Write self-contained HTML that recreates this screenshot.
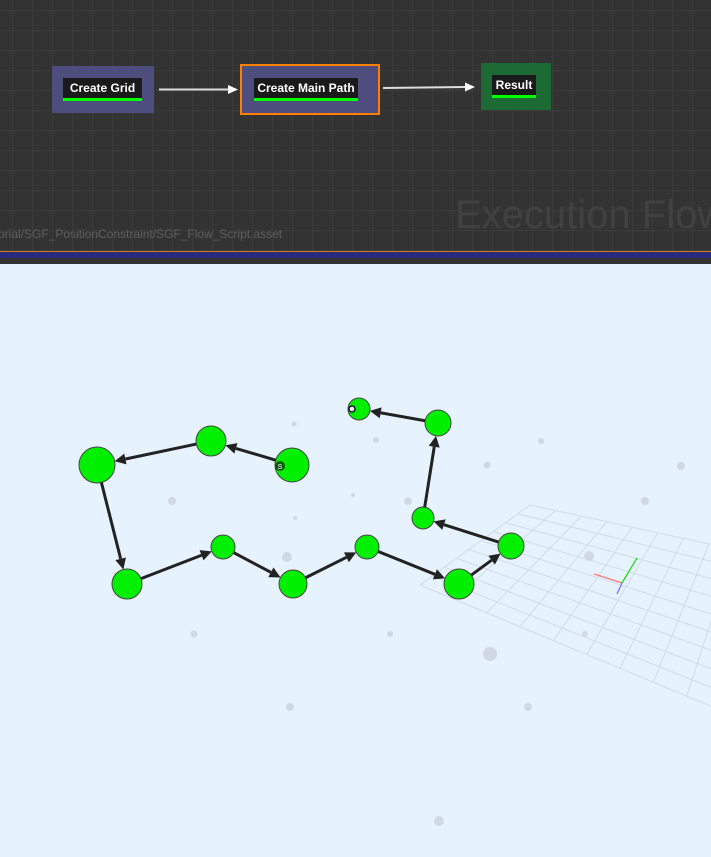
<!DOCTYPE html>
<html><head><meta charset="utf-8"><style>
html,body{margin:0;padding:0;width:711px;height:857px;overflow:hidden;background:#e6f2fe;font-family:"Liberation Sans",sans-serif}
#top{position:absolute;left:0;top:0;width:711px;height:251px;background-color:#333;
background-image:linear-gradient(to right,#3b3b3b 1px,transparent 1px),linear-gradient(to bottom,#3b3b3b 1px,transparent 1px);
background-size:20px 20px;background-position:12px 10px}
.node{position:absolute;box-sizing:border-box}
.lbl{position:absolute;background:#1a1a1a;color:#fff;font-weight:bold;font-size:12px;text-align:center;line-height:20px;border-bottom:3px solid #00ff00}
</style></head><body>
<div id="top">
<div style="position:absolute;left:455px;top:193px;font-size:40px;color:#414141;white-space:nowrap">Execution Flow</div>
<div style="position:absolute;left:-2px;top:227px;font-size:12px;color:#5e5e5e;white-space:nowrap">orial/SGF_PositionConstraint/SGF_Flow_Script.asset</div>
<div class="node" style="left:52px;top:66px;width:102px;height:47px;background:#4e4e7e"><div class="lbl" style="left:11px;top:12px;width:79px">Create Grid</div></div>
<div class="node" style="left:240px;top:64px;width:140px;height:51px;background:#4e4e7e;border:2px solid #ff8000"><div class="lbl" style="left:12px;top:12px;width:104px">Create Main Path</div></div>
<div class="node" style="left:481px;top:63px;width:70px;height:47px;background:#1e6a34"><div class="lbl" style="left:11px;top:12px;width:44px">Result</div></div>
<svg width="711" height="251" style="position:absolute;left:0;top:0">
<line x1="159" y1="89.5" x2="228" y2="89.5" stroke="#ddd" stroke-width="2"/><polygon points="228,85 238,89.5 228,94" fill="#fff"/>
<line x1="383" y1="88" x2="465" y2="87" stroke="#ddd" stroke-width="2"/><polygon points="465,82.5 475,87 465,91.5" fill="#fff"/>
</svg>
</div>
<div style="position:absolute;left:0;top:251px;width:711px;height:1px;background:#d57a1a"></div>
<div style="position:absolute;left:0;top:252px;width:711px;height:6px;background:#2a2a80"></div>
<div style="position:absolute;left:0;top:258px;width:711px;height:6px;background:#333"></div>
<svg id="s" width="711" height="593" viewBox="0 264 711 593" style="position:absolute;left:0;top:264px"></svg>
<script>
var s=document.getElementById('s'),h='';
function L(a,b,t){return [a[0]+(b[0]-a[0])*t,a[1]+(b[1]-a[1])*t];}
var A=[530,505],B=[760,555],C=[720,710],D=[420,585];
for(var i=0;i<=9;i++){var t=i/9,p=L(A,D,t),q=L(B,C,t);h+='<line x1="'+p[0]+'" y1="'+p[1]+'" x2="'+q[0]+'" y2="'+q[1]+'" stroke="#d2dbe6" stroke-width="1"/>';
p=L(A,B,t);q=L(D,C,t);h+='<line x1="'+p[0]+'" y1="'+p[1]+'" x2="'+q[0]+'" y2="'+q[1]+'" stroke="#d2dbe6" stroke-width="1"/>';}
h+='<line x1="594" y1="574" x2="622" y2="583" stroke="#f77" stroke-width="1.3"/><line x1="622" y1="583" x2="637" y2="558" stroke="#2d2" stroke-width="1.3"/><line x1="622" y1="583" x2="617" y2="594" stroke="#77f" stroke-width="1.3"/>';
var d=[[294,424,2.5],[376,440,3],[541,441,3],[487,465,3.5],[681,466,4],[172,501,4],[353,495,2],[295,518,2],[408,501,4],[645,501,4],[287,557,5],[589,556,5],[194,634,3.5],[390,634,3],[585,634,3],[490,654,7],[290,707,4],[528,707,4],[439,821,5]];
d.forEach(function(c){h+='<circle cx="'+c[0]+'" cy="'+c[1]+'" r="'+c[2]+'" fill="#d0d9e3"/>';});
var n=[[292,465,17],[211,441,15],[97,465,18],[127,584,15],[223,547,12],[293,584,14],[367,547,12],[459,584,15],[511,546,13],[423,518,11],[438,423,13],[359,409,11]];
n.forEach(function(c){h+='<circle cx="'+c[0]+'" cy="'+c[1]+'" r="'+c[2]+'" fill="#00f000" stroke="#444" stroke-width="1"/>';});
for(var i=0;i<n.length-1;i++){var a=n[i],b=n[i+1],dx=b[0]-a[0],dy=b[1]-a[1],l=Math.sqrt(dx*dx+dy*dy),ux=dx/l,uy=dy/l;
var x1=a[0]+ux*a[2],y1=a[1]+uy*a[2],x2=b[0]-ux*b[2],y2=b[1]-uy*b[2],bx=x2-ux*11,by=y2-uy*11;
h+='<line x1="'+x1+'" y1="'+y1+'" x2="'+bx+'" y2="'+by+'" stroke="#222" stroke-width="3"/>';
h+='<polygon points="'+x2+','+y2+' '+(bx-uy*5.5)+','+(by+ux*5.5)+' '+(bx+uy*5.5)+','+(by-ux*5.5)+'" fill="#222"/>';}
h+='<circle cx="280" cy="466" r="5" fill="#0a5a0a"/><text x="280" y="469" font-size="7" fill="#fff" text-anchor="middle" font-family="Liberation Sans">S</text>';
h+='<circle cx="352" cy="409" r="3" fill="#fff" stroke="#113" stroke-width="1.5"/>';
s.innerHTML=h;
</script>
</body></html>
